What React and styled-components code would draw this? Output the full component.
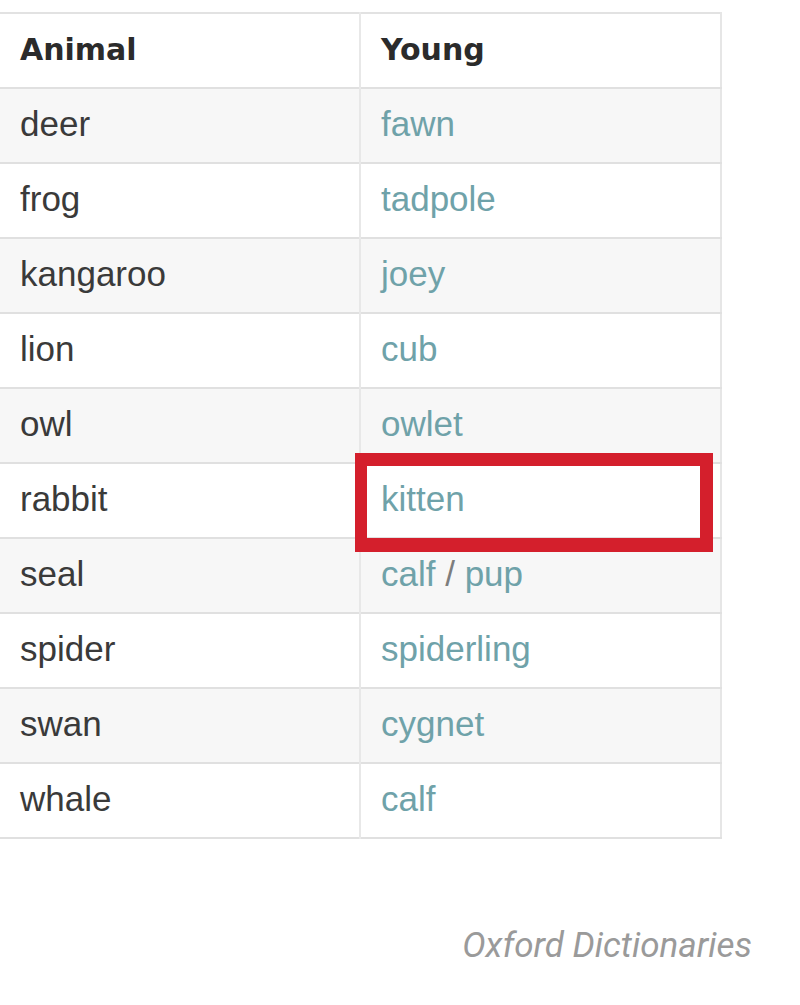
import React from "react";
import styled, { createGlobalStyle } from "styled-components";

const Global = createGlobalStyle`
  html, body { margin: 0; padding: 0; background: #ffffff; }
  body { font-family: "Liberation Sans", Arial, sans-serif; }
`;

const Page = styled.div`
  width: 800px;
  height: 1005px;
  padding-top: 12px;
  box-sizing: border-box;
  display: flex;
  flex-direction: column;
  background: #fff;
`;

const TableWrap = styled.div`
  position: relative;
  width: 722px;
`;

const Table = styled.table`
  width: 722px;
  border-collapse: collapse;
  table-layout: fixed;
  border-top: 2px solid #e2e2e2;
  border-right: 2px solid #e6e6e6;
`;

const Row = styled.tr`
  height: 75px;
  background: ${(p) => (p.$shaded ? "#f7f7f7" : "#ffffff")};
  border-bottom: 2px solid #e0e0e0;
`;

const HeadCell = styled.th`
  text-align: left;
  padding: 0 0 2px 20px;
  font-family: "DejaVu Sans", Verdana, sans-serif;
  font-weight: 700;
  font-size: 30px;
  color: #2b2b2b;
  border-left: ${(p) => (p.$divided ? "2px solid #e8e8e8" : "none")};
`;

const Cell = styled.td`
  padding: 0 0 3px 20px;
  font-size: 35px;
  color: ${(p) => (p.$link ? "#6fa2a9" : "#3a3a3a")};
  border-left: ${(p) => (p.$divided ? "2px solid #e8e8e8" : "none")};
  vertical-align: middle;
`;

const Sep = styled.span`
  color: #7d7d7d;
`;

const Highlight = styled.div`
  position: absolute;
  left: 355px;
  top: 441px;
  width: 358px;
  height: 99px;
  border-style: solid;
  border-color: #d41f2c;
  border-width: 13px 13px 14px 12px;
  box-sizing: border-box;
  pointer-events: none;
`;

const Caption = styled.div`
  width: 752px;
  margin-top: 86px;
  text-align: right;
  font-family: Roboto, "Liberation Sans", sans-serif;
  font-style: italic;
  font-size: 35px;
  color: #9a9a9a;
`;

const rows = [
  ["deer", ["fawn"]],
  ["frog", ["tadpole"]],
  ["kangaroo", ["joey"]],
  ["lion", ["cub"]],
  ["owl", ["owlet"]],
  ["rabbit", ["kitten"]],
  ["seal", ["calf", "pup"]],
  ["spider", ["spiderling"]],
  ["swan", ["cygnet"]],
  ["whale", ["calf"]],
];

export default function App() {
  return (
    <Page>
      <Global />
      <TableWrap>
        <Table>
          <colgroup>
            <col style={{ width: 360 }} />
            <col />
          </colgroup>
          <thead>
            <Row>
              <HeadCell>Animal</HeadCell>
              <HeadCell $divided>Young</HeadCell>
            </Row>
          </thead>
          <tbody>
            {rows.map(([animal, young], i) => (
              <Row key={animal} $shaded={i % 2 === 0}>
                <Cell>{animal}</Cell>
                <Cell $divided $link>
                  {young.map((y, j) => (
                    <React.Fragment key={y}>
                      {j > 0 && <Sep> / </Sep>}
                      {y}
                    </React.Fragment>
                  ))}
                </Cell>
              </Row>
            ))}
          </tbody>
        </Table>
        <Highlight />
      </TableWrap>
      <Caption>Oxford Dictionaries</Caption>
    </Page>
  );
}
